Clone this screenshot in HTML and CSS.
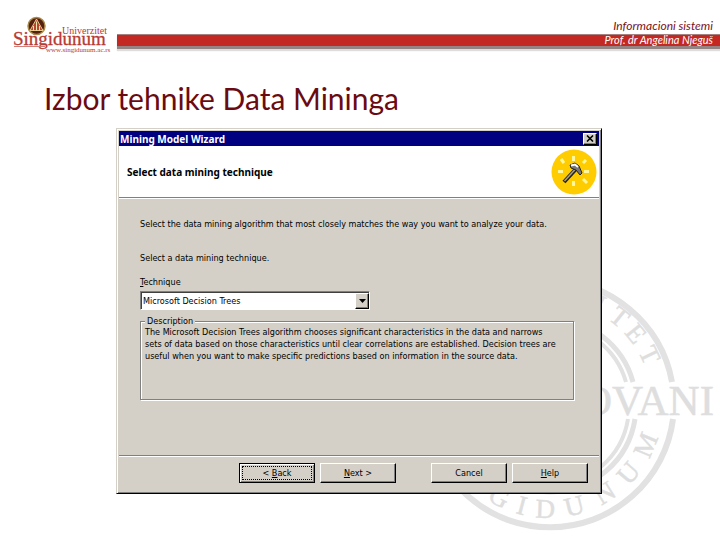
FILE: index.html
```html
<!DOCTYPE html>
<html lang="sr-Latn">
<head>
<meta charset="utf-8">
<title>Izbor tehnike Data Mininga</title>
<link rel="stylesheet" href="styles.css">
</head>
<body>
<svg class="seal" viewBox="0 0 300 264" aria-hidden="true">
  <g fill="none" stroke="#e2e2e2" transform="translate(2 0)">
    <path stroke-width="6" d="M6 110A124 124 0 0 1 250 110M5 147A124 124 0 0 0 251 147"/>
    <path stroke-width="5" d="M45 110A86 86 0 0 1 211 110M43 147A86 86 0 0 0 213 147"/>
    <path stroke-width="4" d="M52 110A79 79 0 0 1 204 110M50 147A79 79 0 0 0 206 147"/>
  </g>
  <g class="seal-ring" transform="translate(129 132)">
    <text y="-103" transform="rotate(27)">I</text>
    <text y="-103" transform="rotate(39)">T</text>
    <text y="-103" transform="rotate(51)">E</text>
    <text y="-103" transform="rotate(64)">T</text>
    <text y="114" transform="rotate(28)">G</text>
    <text y="114" transform="rotate(15)">I</text>
    <text y="114" transform="rotate(2)">D</text>
    <text y="114" transform="rotate(-14)">U</text>
    <text y="114" transform="rotate(-32)">N</text>
    <text y="114" transform="rotate(-49)">U</text>
    <text y="114" transform="rotate(-67)">M</text>
  </g>
  <text class="seal-name" x="294" y="143">OVANI</text>
</svg>

<header class="top">
  <svg class="logo" viewBox="0 0 100 40" role="img" aria-label="Univerzitet Singidunum">
    <circle cx="24.500" cy="11" r="8.500" fill="#55200f" stroke="#a98a4c" stroke-width="1.500"/>
    <path d="M24.500 4L31 15.500H18Z" fill="#b5452d" stroke="#e4c98a"/>
    <path d="M24.500 6.500V15.500M21.500 11V15.500M27.500 11V15.500" stroke="#f3dfb0" fill="none"/>
    <text class="logo-top" x="50" y="19">Univerzitet</text>
    <text class="logo-main" x="1" y="30">Singidunum</text>
    <path d="M2 31.500H33" stroke="#d08078"/>
    <text class="logo-url" x="34" y="37">www.singidunum.ac.rs</text>
  </svg>
  <div class="banner">
    <div class="course">Informacioni sistemi</div>
    <div class="teacher">Prof. dr Angelina Njeguš</div>
  </div>
</header>

<main>
  <h1>Izbor tehnike Data Mininga</h1>
  <section class="dialog" aria-labelledby="wizard-title">
    <div class="titlebar">
      <h2 id="wizard-title">Mining Model Wizard</h2>
      <button class="close" type="button" aria-label="Close">
        <svg viewBox="0 0 8 7"><path d="M1 0.500L7 6.500M7 0.500L1 6.500" stroke="#000" stroke-width="1.600"/></svg>
      </button>
    </div>
    <div class="step">
      <h3>Select data mining technique</h3>
      <svg class="step-icon" viewBox="0 0 46 46" aria-hidden="true">
        <circle cx="23" cy="23" r="22.500" fill="#fc0"/>
        <path d="M22.500 7V12M22.500 32V37M7 22.500H12M33 22.500H38M10 10L13 14M35 11L32 14M32 30L36 34" stroke="#fff799" stroke-width="3"/>
        <path d="M25 20L13 33" stroke="#222" stroke-width="4"/>
        <path d="M24.500 20L13.500 32" stroke="#a8a088" stroke-width="1.500"/>
        <path d="M19 16L24 14L28 17L31 24L29 26L25 21L20 19Z" fill="#777" stroke="#222"/>
        <path d="M20 16.500L24 15.500L27 18" stroke="#fff" stroke-width="2" fill="none"/>
      </svg>
    </div>
    <form class="content">
      <p>Select the data mining algorithm that most closely matches the way you want to analyze your data.</p>
      <p>Select a data mining technique.</p>
      <label for="technique"><u>T</u>echnique</label>
      <div class="picker">
        <select id="technique"><option>Microsoft Decision Trees</option></select>
        <span class="arrow"><svg viewBox="0 0 7 4"><path d="M0 0H7L3.500 4Z"/></svg></span>
      </div>
      <fieldset>
        <legend>Description</legend>
        The Microsoft Decision Trees algorithm chooses significant characteristics in the data and narrows<br>
        sets of data based on those characteristics until clear correlations are established. Decision trees are<br>
        useful when you want to make specific predictions based on information in the source data.
      </fieldset>
    </form>
    <div class="actions">
      <button class="btn default" type="button">&lt; <u>B</u>ack</button>
      <button class="btn next" type="button"><u>N</u>ext &gt;</button>
      <button class="btn" type="button">Cancel</button>
      <button class="btn" type="button"><u>H</u>elp</button>
    </div>
  </section>
</main>
</body>
</html>
```
FILE: styles.css
```css
* { box-sizing: border-box; }

body {
  position: relative;
  min-height: 100vh;
  margin: 0;
  background: #fff;
  font-family: Lato, "Liberation Sans", sans-serif;
}

.seal {
  position: absolute;
  right: 0;
  bottom: 4px;
  width: 300px;
  height: 264px;
  z-index: -1;
}
.seal text { font-family: "Liberation Serif", serif; fill: #dedede; stroke: #dedede; stroke-width: 0.5px; }
.seal-ring text { font-size: 27px; text-anchor: middle; }
.seal .seal-name { font-size: 43px; text-anchor: end; }

.top {
  display: flex;
  align-items: flex-start;
  gap: 5px;
  padding: 15px 0 0 12px;
}
.logo { flex: none; width: 100px; height: 40px; }
.logo text { font-family: "Liberation Serif", serif; fill: #b83a32; }
.logo .logo-main { font-size: 19px; stroke: #b83a32; stroke-width: 0.3px; }
.logo .logo-top { font-size: 10px; }
.logo .logo-url { font-size: 7px; }

.banner {
  flex: 1;
  font-size: 11px;
  font-style: italic;
  text-align: right;
}
.course { height: 19px; padding: 3px 7px 0 0; font-size: 12px; line-height: 16px; color: #7a1218; }
.teacher {
  height: 15px;
  padding-right: 7px;
  border-top: 1px solid #a88080;
  border-bottom: 3px solid #948484;
  background: #c42822;
  box-shadow: 0 2px 1px #ddd;
  color: #fff;
  line-height: 10px;
}

h1 {
  margin: 25px 44px 11px;
  color: #6b0a10;
  font-size: 30px;
  font-weight: 400;
  line-height: 37px;
}

.dialog {
  margin: 0 118px 0 116px;
  padding: 1px;
  border: 1px solid;
  border-color: #d4d0c8 #000 #000 #d4d0c8;
  background: #d4d0c8;
  box-shadow: inset 1px 1px #fff, inset -1px -1px #808080;
  font-family: "DejaVu Sans Condensed", "Liberation Sans", sans-serif;
  font-size: 9px;
  line-height: 12px;
  color: #000;
}

.titlebar {
  display: flex;
  align-items: center;
  justify-content: space-between;
  height: 15px;
  margin: 1px 1px 0;
  padding: 0 2px 0 1px;
  background: #000080;
  color: #fff;
}
.dialog h2, .dialog h3 { margin: 0; font-family: "Noto Sans", "DejaVu Sans Condensed", sans-serif; font-size: 10px; }

.close, .btn {
  border: 1px solid;
  border-color: #fff #000 #000 #fff;
  background: #d4d0c8;
  box-shadow: inset -1px -1px #808080;
  font: inherit;
  color: #000;
}
.close { display: grid; place-items: center; width: 14px; height: 12px; padding: 0; }
.close svg { width: 8px; height: 7px; }

.step {
  display: flex;
  align-items: center;
  justify-content: space-between;
  height: 52px;
  margin: 0 1px;
  padding: 0 2px 0 8px;
  border-bottom: 1px solid #808080;
  background: #fff;
  box-shadow: 0 1px #fff;
}
.step-icon { width: 46px; height: 46px; }

.content { padding: 20px 26px 55px 22px; }
.content p { margin: 0 0 22px; }
.content p + p { margin-bottom: 12px; }
.content label { display: block; margin-bottom: 3px; }

.picker { position: relative; width: 230px; }
.picker select {
  display: block;
  appearance: none;
  width: 100%;
  height: 19px;
  padding: 0 18px 0 2px;
  border: 1px solid;
  border-color: #808080 #fff #fff #808080;
  border-radius: 0;
  background: #fff;
  box-shadow: inset 1px 1px #404040;
  font: inherit;
  color: #000;
}
.arrow {
  position: absolute;
  top: 2px;
  right: 1px;
  bottom: 1px;
  display: grid;
  place-items: center;
  width: 14px;
  border: 1px solid;
  border-color: #fff #000 #000 #fff;
  background: #d4d0c8;
  box-shadow: inset -1px -1px #808080;
  pointer-events: none;
}
.arrow svg { width: 7px; height: 4px; }

fieldset {
  min-width: 0;
  height: 84px;
  margin: 6px 0 0;
  padding: 0 4px;
  border: 1px solid #808080;
  box-shadow: 1px 1px #fff, inset 1px 1px #fff;
  white-space: nowrap;
}
legend { padding: 0 2px; line-height: 10px; background: #d4d0c8; }

.actions {
  display: flex;
  justify-content: flex-end;
  gap: 5px;
  margin: 0 1px;
  padding: 7px 11px 9px;
  border-top: 1px solid #808080;
  box-shadow: inset 0 1px #fff;
}
.btn { width: 76px; height: 20px; padding: 0; }
.next { margin-right: 30px; }
.default {
  border-color: #000;
  box-shadow: inset 1px 1px #fff, inset -1px -1px #808080;
  outline: 1px dotted #000;
  outline-offset: -4px;
}
```
